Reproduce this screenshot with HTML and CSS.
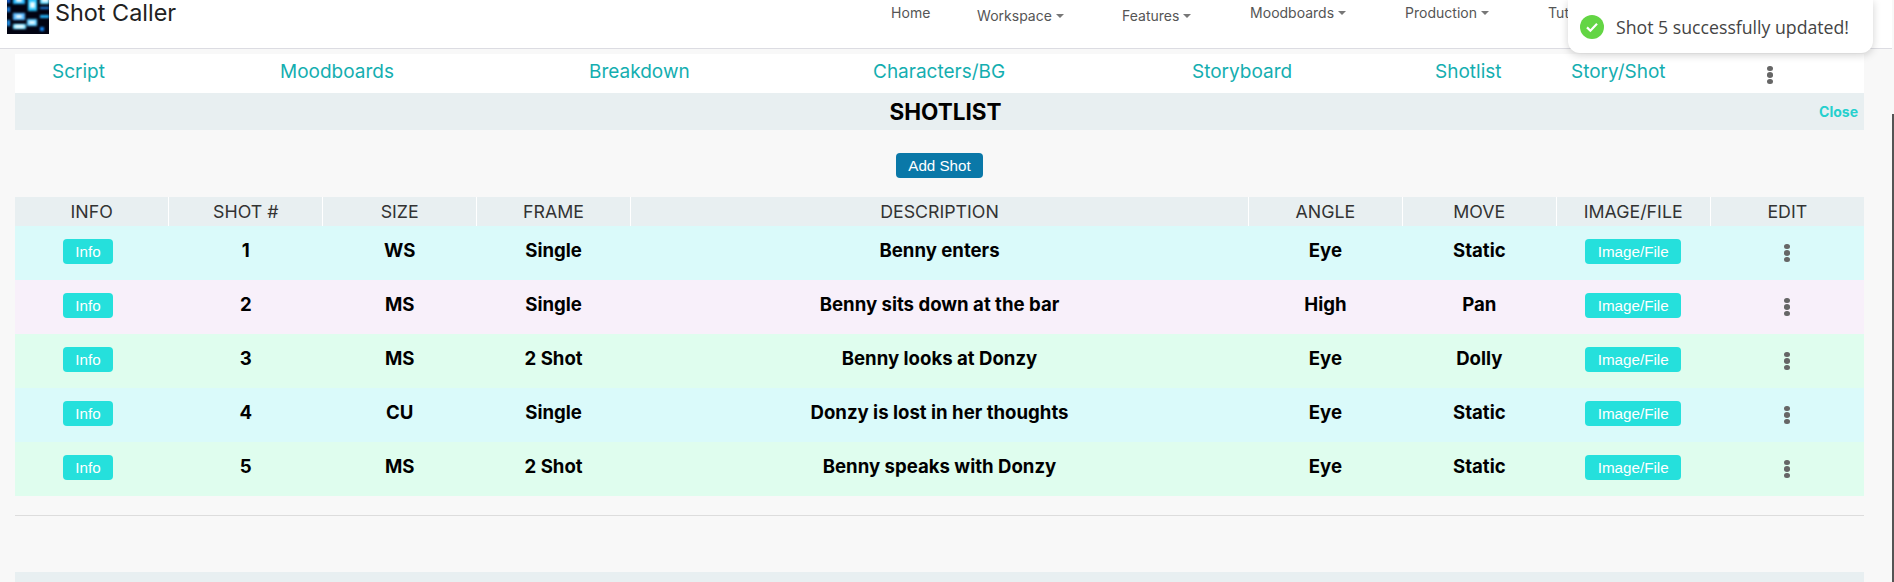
FILE: index.html
```html
<!DOCTYPE html>
<html lang="en">
<head>
<meta charset="UTF-8">
<meta name="viewport" content="width=device-width, initial-scale=1.0">
<title>Shot Caller</title>
<link rel="stylesheet" href="styles.css">
</head>
<body>

<nav class="navbar">
    <a class="brand" href="#">
        <svg class="brand-logo" width="42" height="34" viewBox="0 0 42 34">
            <defs><filter id="soft"><feGaussianBlur stdDeviation="1"/></filter></defs>
            <rect width="42" height="34" fill="#020312"/>
            <g filter="url(#soft)">
                <rect x="0" y="-2" width="3" height="5" fill="#1670f0"/>
                <rect x="6" y="-3" width="12" height="7" fill="#22b8ff"/>
                <rect x="21" y="-2" width="9" height="13" fill="#28c4ff"/>
                <rect x="33" y="-3" width="9" height="7" fill="#60d8ff"/>
                <rect x="33" y="7" width="9" height="2" fill="#1a86e8"/>
                <rect x="33" y="15" width="9" height="3" fill="#28b8ff"/>
                <rect x="0" y="7" width="3" height="5" fill="#1c8cf8"/>
                <rect x="6" y="13" width="12" height="7" fill="#58b8ff"/>
                <rect x="0" y="20" width="3" height="6" fill="#20a0ff"/>
                <rect x="20" y="19" width="10" height="7" fill="#58c8ff"/>
                <rect x="6" y="24" width="13" height="5" fill="#70dcff"/>
                <rect x="33" y="27" width="4" height="4" fill="#1488f8"/>
            </g>
            <g filter="url(#soft)" fill="#eefcff">
                <rect x="9" y="-2" width="6" height="4"/>
                <rect x="23" y="2" width="5" height="6"/>
                <rect x="35" y="-2" width="6" height="4"/>
                <rect x="9" y="15" width="6" height="3"/>
                <rect x="22" y="21" width="6" height="3"/>
                <rect x="8" y="25" width="9" height="3"/>
            </g>
        </svg>
        <span class="brand-name">Shot Caller</span>
    </a>
    <ul class="nav-links">
        <li class="nav-home">Home</li>
        <li class="nav-workspace nav-low">Workspace<span class="caret"></span></li>
        <li class="nav-features nav-low">Features<span class="caret"></span></li>
        <li class="nav-moodboards">Moodboards<span class="caret"></span></li>
        <li class="nav-production">Production<span class="caret"></span></li>
        <li class="nav-tutorials">Tutorials</li>
    </ul>
</nav>

<main class="content">
    <div class="tabs">
        <a href="#">Script</a>
        <a href="#">Moodboards</a>
        <a href="#">Breakdown</a>
        <a href="#">Characters/BG</a>
        <a href="#">Storyboard</a>
        <a href="#">Shotlist</a>
        <a href="#">Story/Shot</a>
        <span class="dots"><i></i><i></i><i></i></span>
    </div>

    <div class="title-bar">
        <h2>SHOTLIST</h2>
        <a class="close-link" href="#">Close</a>
    </div>

    <div class="add-row">
        <button class="btn btn-add">Add Shot</button>
    </div>

    <table class="shot-table">
        <thead>
            <tr>
                <th>INFO</th>
                <th>SHOT #</th>
                <th>SIZE</th>
                <th>FRAME</th>
                <th class="col-desc">DESCRIPTION</th>
                <th>ANGLE</th>
                <th>MOVE</th>
                <th>IMAGE/FILE</th>
                <th>EDIT</th>
            </tr>
        </thead>
        <tbody>
            <tr class="row-cyan">
                <td class="cell-info"><button class="btn btn-teal">Info</button></td>
                <td>1</td><td>WS</td><td>Single</td><td>Benny enters</td><td>Eye</td><td>Static</td>
                <td><button class="btn btn-teal btn-file">Image/File</button></td>
                <td><span class="dots"><i></i><i></i><i></i></span></td>
            </tr>
            <tr class="row-lilac">
                <td class="cell-info"><button class="btn btn-teal">Info</button></td>
                <td>2</td><td>MS</td><td>Single</td><td>Benny sits down at the bar</td><td>High</td><td>Pan</td>
                <td><button class="btn btn-teal btn-file">Image/File</button></td>
                <td><span class="dots"><i></i><i></i><i></i></span></td>
            </tr>
            <tr class="row-green">
                <td class="cell-info"><button class="btn btn-teal">Info</button></td>
                <td>3</td><td>MS</td><td>2 Shot</td><td>Benny looks at Donzy</td><td>Eye</td><td>Dolly</td>
                <td><button class="btn btn-teal btn-file">Image/File</button></td>
                <td><span class="dots"><i></i><i></i><i></i></span></td>
            </tr>
            <tr class="row-cyan">
                <td class="cell-info"><button class="btn btn-teal">Info</button></td>
                <td>4</td><td>CU</td><td>Single</td><td>Donzy is lost in her thoughts</td><td>Eye</td><td>Static</td>
                <td><button class="btn btn-teal btn-file">Image/File</button></td>
                <td><span class="dots"><i></i><i></i><i></i></span></td>
            </tr>
            <tr class="row-green">
                <td class="cell-info"><button class="btn btn-teal">Info</button></td>
                <td>5</td><td>MS</td><td>2 Shot</td><td>Benny speaks with Donzy</td><td>Eye</td><td>Static</td>
                <td><button class="btn btn-teal btn-file">Image/File</button></td>
                <td><span class="dots"><i></i><i></i><i></i></span></td>
            </tr>
        </tbody>
    </table>

    <hr class="divider">
    <div class="next-bar"></div>
</main>

<div class="toast">
    <svg class="toast-icon" width="24" height="24" viewBox="0 0 24 24">
        <circle cx="12" cy="12" r="12" fill="#63d544"/>
        <path d="M7 12.4l3.4 3.3 6.6-6.9" fill="none" stroke="#fff" stroke-width="2.2"/>
    </svg>
    <span>Shot 5 successfully updated!</span>
</div>

<div class="scroll-thumb"></div>

</body>
</html>
```

FILE: styles.css
```css
html, body {
    height: 582px;
    overflow: hidden;
}
body {
    margin: 0;
    background-color: #f8f8f8;
    font-family: Inter, "Noto Sans", sans-serif;
    color: #000;
}
a {
    text-decoration: none;
}

/* top bar */
.navbar {
    display: flex;
    height: 48px;
    margin-right: 2px;
    background-color: #fff;
    border-bottom: 1px solid #dcdce2;
}
.brand {
    display: flex;
    align-items: flex-start;
    gap: 6px;
    margin-left: 7px;
}
.brand-logo {
    display: block;
}
.brand-name {
    font-size: 23.4px;
    line-height: 25px;
    color: #222;
}
.nav-links {
    display: flex;
    margin: 4px 0 0 715px;
    padding: 0;
    list-style: none;
    font-size: 14px;
    line-height: 18px;
    color: #555;
}
.nav-home { width: 86px; }
.nav-workspace { width: 145px; }
.nav-features { width: 128px; }
.nav-moodboards { width: 155px; }
.nav-production { width: 143px; }
.nav-low {
    margin-top: 3px;
}
.caret {
    display: inline-block;
    margin-left: 4px;
    vertical-align: 3px;
    border-top: 4px solid #777;
    border-left: 4px solid transparent;
    border-right: 4px solid transparent;
}

/* main panel */
.content {
    margin: 5px 30px 0 15px;
}
.tabs {
    display: grid;
    grid-template-columns: 228px 309px 284px 319px 243px 136px 196px auto;
    align-items: center;
    box-sizing: border-box;
    height: 39px;
    padding: 0 0 4px 37px;
    background-color: #fff;
    font-size: 19px;
}
.tabs a {
    color: #14aeb0;
}
.tabs .dots {
    margin-top: 7px;
}
.dots {
    display: inline-flex;
    flex-direction: column;
    gap: 1px;
    vertical-align: middle;
}
.dots i {
    display: block;
    width: 6px;
    height: 5.5px;
    border-radius: 50%;
    background-color: #666;
}
.title-bar {
    position: relative;
    box-sizing: border-box;
    height: 37px;
    padding-left: 12px;
    background-color: #e8eff1;
    text-align: center;
}
.title-bar h2 {
    margin: 0;
    font-size: 22.5px;
    line-height: 37px;
}
.close-link {
    position: absolute;
    top: 10px;
    right: 6px;
    font-size: 14px;
    font-weight: bold;
    color: #25d0ce;
}
.add-row {
    display: flex;
    justify-content: center;
    box-sizing: border-box;
    height: 67px;
    padding-top: 23px;
}
.btn {
    height: 25px;
    padding: 0;
    border: none;
    border-radius: 4px;
    color: #fff;
    font-family: "Liberation Sans", Arial, sans-serif;
    font-size: 15.2px;
    cursor: pointer;
}
.btn-add {
    width: 87px;
    background-color: #0a78a8;
}
.btn-teal {
    width: 50px;
    background-color: #25e0dc;
}
.btn-file {
    width: 96px;
}

/* shots table */
.shot-table {
    width: 100%;
    table-layout: fixed;
    border-collapse: collapse;
}
.shot-table th {
    height: 29px;
    padding: 0;
    background-color: #e8eff1;
    border-right: 1px solid #fff;
    font-size: 17.8px;
    font-weight: normal;
    color: #333;
}
.shot-table th:last-child {
    border-right: none;
}
.col-desc {
    width: 617px;
}
.shot-table td {
    box-sizing: border-box;
    height: 54px;
    padding: 0 0 7px;
    text-align: center;
    font-size: 18.6px;
    font-weight: bold;
}
.shot-table td .btn {
    vertical-align: middle;
    margin-top: 3px;
}
.shot-table td .dots {
    margin-top: 7px;
}
.cell-info {
    padding-right: 8px !important;
}
.row-cyan { background-color: #dafafa; }
.row-lilac { background-color: #f8f0fa; }
.row-green { background-color: #dffdee; }

.divider {
    margin: 19px 0 0;
    border: none;
    border-top: 1px solid #ddd;
}
.next-bar {
    height: 30px;
    margin-top: 56px;
    background-color: #e8eff1;
}

/* overlays */
.toast {
    position: absolute;
    top: 0;
    left: 1568px;
    display: flex;
    align-items: center;
    gap: 12px;
    box-sizing: border-box;
    width: 305px;
    height: 53px;
    padding-left: 12px;
    background-color: #fff;
    border-radius: 0 0 12px 12px;
    box-shadow: 0 2px 8px rgba(0, 0, 0, 0.18);
    font-family: "Open Sans", sans-serif;
    font-size: 17.7px;
    color: #444;
}
.scroll-thumb {
    position: absolute;
    top: 114px;
    right: 0;
    width: 2px;
    height: 468px;
    background-color: #555;
}
```
